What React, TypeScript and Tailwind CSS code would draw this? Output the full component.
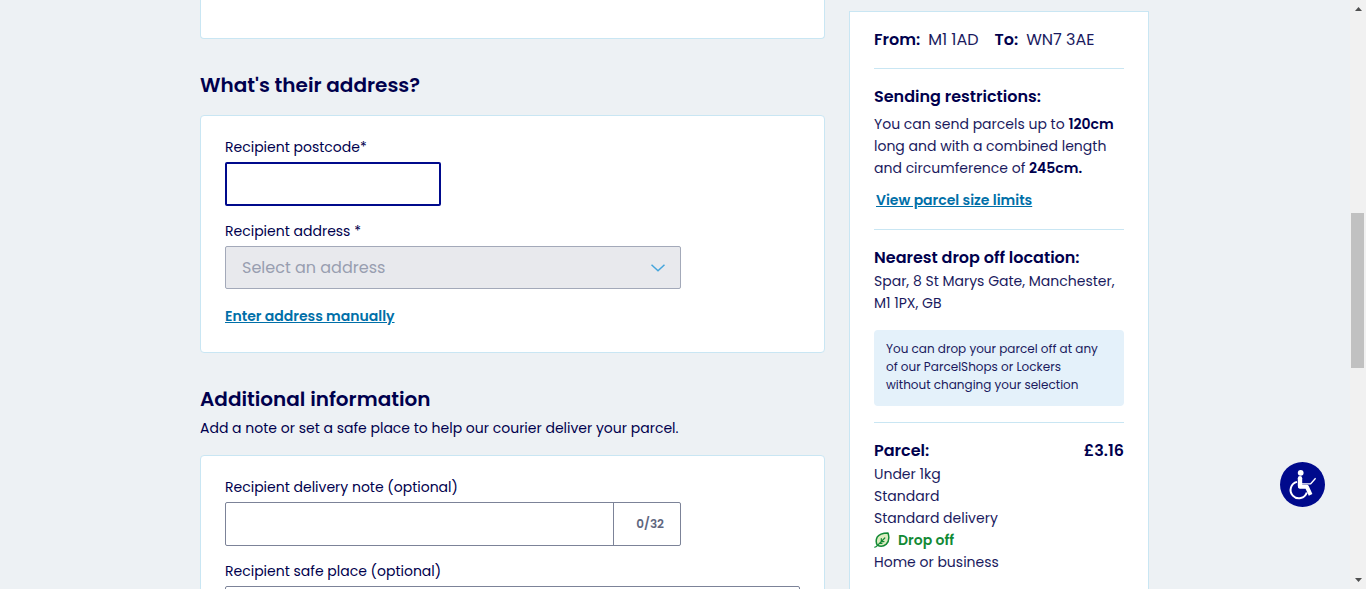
import type { ReactNode } from "react";

function Field({ id, label, children }: { id: string; label: string; children: ReactNode }) {
  return (
    <div>
      <label htmlFor={id} className="mb-1 block text-sm leading-[22px]">
        {label}
      </label>
      {children}
    </div>
  );
}

function Card({ children }: { children: ReactNode }) {
  return (
    <div className="flex flex-col gap-[14px] rounded border border-[#c9e6f3] bg-white px-6 pt-5 pb-[25px]">
      {children}
    </div>
  );
}

function SummaryTitle({ children }: { children: ReactNode }) {
  return <h3 className="text-base leading-6 font-semibold text-[#00004d]">{children}</h3>;
}

function LeafIcon() {
  return (
    <svg viewBox="0 0 16 16" className="size-4" fill="none" strokeLinecap="round" strokeLinejoin="round" aria-hidden="true">
      <path
        d="M14 0.900C9.500 0.900 5 1.900 3.200 5.200C1.800 8 2.100 11.200 3.500 13.400C6.200 14.700 9.900 14.300 12.300 12.100C15.200 9.300 15.200 4.700 14 0.900Z"
        fill="#dcecc0"
        stroke="#128a35"
        strokeWidth="1.500"
      />
      <path d="M0.800 15.200C2.300 15.200 3 14 4 12.900L10.800 6M7.300 9.300V6.600M7.100 9.600H10M5.400 11.300H8" stroke="#128a35" strokeWidth="1.200" />
    </svg>
  );
}

function WheelchairIcon() {
  return (
    <svg viewBox="0 0 45 45" className="size-[45px]" fill="none" aria-hidden="true">
      <circle cx="20.700" cy="10.800" r="2.900" fill="#fff" />
      <path d="M20 16.200V24.700H26.800L30.600 32.800" stroke="#fff" strokeWidth="4" strokeLinejoin="round" />
      <path d="M20 16.200V24" stroke="#fff" strokeWidth="4.400" strokeLinecap="round" />
      <path d="M21.500 21.800H30.700L35.600 16.200" stroke="#fff" strokeWidth="1.300" />
      <path d="M17 19.900A8.300 8.300 0 1 0 26.800 30.500" stroke="#fff" strokeWidth="2" />
    </svg>
  );
}

export default function App() {
  return (
    <div className="flex h-screen overflow-hidden bg-[#edf1f4] font-['Poppins','Inter',sans-serif] text-[#00004d]">
      <main className="min-w-0 flex-1 pr-px">
        <div className="mx-auto grid max-w-[949px] grid-cols-[minmax(0,1fr)_300px] gap-6">
          <form>
            <div className="h-[39px] rounded-b border border-t-0 border-[#c9e6f3] bg-white" />

            <h2 className="mt-8 mb-4 text-xl leading-7 font-semibold">What's their address?</h2>
            <Card>
              <Field id="postcode" label="Recipient postcode*">
                <input
                  id="postcode"
                  type="text"
                  className="block h-11 w-[216px] rounded-[2px] border-2 border-[#000a8c] bg-white px-4 text-base outline-none"
                />
              </Field>
              <Field id="address" label="Recipient address *">
                <div className="relative max-w-[456px]">
                  <select
                    id="address"
                    disabled
                    className="block h-[43px] w-full appearance-none rounded-[2px] border border-[#a3a9b9] bg-[#e8e9ed] px-4 text-base text-[#989eb0] opacity-100"
                  >
                    <option>Select an address</option>
                  </select>
                  <svg
                    viewBox="0 0 14 8"
                    className="pointer-events-none absolute top-[18px] right-4 h-2 w-3.5"
                    fill="none"
                    stroke="#45a5dc"
                    strokeWidth="1.500"
                    aria-hidden="true"
                  >
                    <path d="M0.500 0.700L7 6.700L13.500 0.700" />
                  </svg>
                </div>
              </Field>
              <a href="#manual" className="mt-0.5 self-start text-sm leading-[22px] font-semibold text-[#006fa8] underline">
                Enter address manually
              </a>
            </Card>

            <h2 className="mt-8 text-xl leading-7 font-semibold">Additional information</h2>
            <p className="mt-1 mb-4 text-sm leading-[22px]">
              Add a note or set a safe place to help our courier deliver your parcel.
            </p>
            <Card>
              <Field id="note" label="Recipient delivery note (optional)">
                <div className="flex h-11 max-w-[456px] rounded-[2px] border border-[#7c8398]">
                  <input id="note" type="text" maxLength={32} className="min-w-0 flex-1 px-4 text-base outline-none" />
                  <span className="flex w-[67px] items-center justify-end border-l border-[#7c8398] pr-4 text-xs font-semibold text-[#5f6780]">
                    0/32
                  </span>
                </div>
              </Field>
              <Field id="safe-place" label="Recipient safe place (optional)">
                <input
                  id="safe-place"
                  type="text"
                  className="block h-11 w-full rounded-[2px] border border-[#7c8398] bg-white px-4 text-base outline-none"
                />
              </Field>
            </Card>
          </form>

          <aside className="mt-[11px] border border-[#c9e6f3] bg-white px-6 pt-4 pb-10 text-sm leading-[22px] text-[#1a1a5e]">
            <dl className="flex gap-2 pb-4 text-base leading-6">
              <dt className="font-semibold text-[#00004d]">From:</dt>
              <dd className="mr-2">M1 1AD</dd>
              <dt className="font-semibold text-[#00004d]">To:</dt>
              <dd>WN7 3AE</dd>
            </dl>

            <section className="border-t border-[#c9e6f3] pt-4 pb-[18px]">
              <SummaryTitle>Sending restrictions:</SummaryTitle>
              <p className="mt-1">
                You can send parcels up to <b className="font-semibold text-[#00004d]">120cm</b> long and with a combined
                length and circumference of <b className="font-semibold text-[#00004d]">245cm.</b>
              </p>
              <a href="#limits" className="mt-2.5 ml-0.5 block w-fit font-semibold text-[#006fa8] underline">
                View parcel size limits
              </a>
            </section>

            <section className="border-t border-[#c9e6f3] py-4">
              <SummaryTitle>Nearest drop off location:</SummaryTitle>
              <p>Spar, 8 St Marys Gate, Manchester, M1 1PX, GB</p>
              <p className="mt-4 rounded bg-[#e4f1fa] pt-2.5 pr-5 pb-3 pl-3 text-xs leading-[18px]">
                You can drop your parcel off at any of our ParcelShops or Lockers without changing your selection
              </p>
            </section>

            <section className="border-t border-[#c9e6f3] pt-4">
              <div className="flex justify-between">
                <SummaryTitle>Parcel:</SummaryTitle>
                <span className="text-base leading-6 font-semibold text-[#00004d]">£3.16</span>
              </div>
              <ul>
                <li>Under 1kg</li>
                <li>Standard</li>
                <li>Standard delivery</li>
                <li className="flex items-center gap-2 font-semibold text-[#128a35]">
                  <LeafIcon />
                  Drop off
                </li>
                <li>Home or business</li>
              </ul>
            </section>
          </aside>
        </div>
      </main>

      <div className="flex w-4 shrink-0 flex-col items-center justify-between bg-[#f1f1f1] py-[7px]" aria-hidden="true">
        <svg viewBox="0 0 7 4" className="h-1 w-[7px]" fill="#505050">
          <path d="M0 4L3.500 0L7 4Z" />
        </svg>
        <div className="flex w-full flex-1 flex-col px-px">
          <div className="flex-[202]" />
          <div className="mr-px flex-[155] bg-[#c1c1c1]" />
          <div className="flex-[210]" />
        </div>
        <svg viewBox="0 0 7 4" className="h-1 w-[7px]" fill="#505050">
          <path d="M0 0L3.500 4L7 0Z" />
        </svg>
      </div>

      <button
        type="button"
        aria-label="Accessibility options"
        className="fixed right-[41px] bottom-[82px] size-[45px] rounded-full bg-[#000a8c]"
      >
        <WheelchairIcon />
      </button>
    </div>
  );
}
